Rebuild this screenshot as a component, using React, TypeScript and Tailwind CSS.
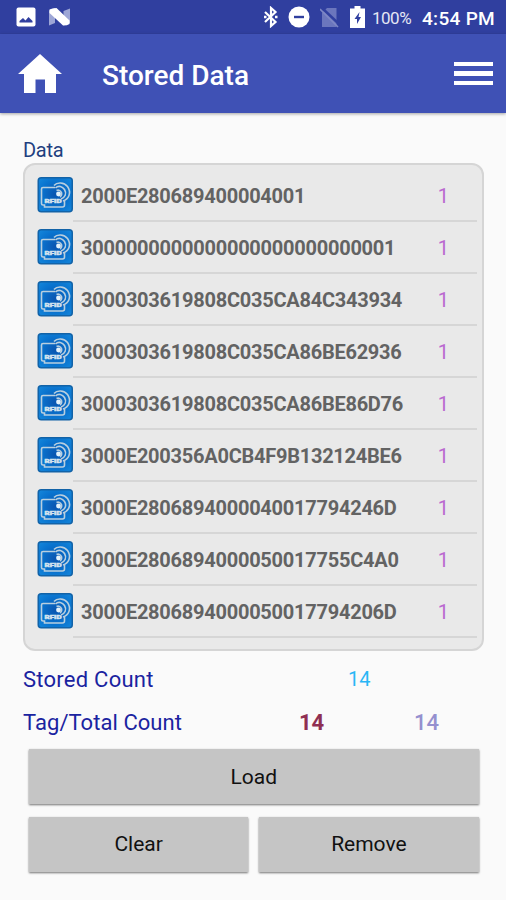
const tags = [
  { id: "2000E280689400004001", count: 1 },
  { id: "3000000000000000000000000001", count: 1 },
  { id: "3000303619808C035CA84C343934", count: 1 },
  { id: "3000303619808C035CA86BE62936", count: 1 },
  { id: "3000303619808C035CA86BE86D76", count: 1 },
  { id: "3000E200356A0CB4F9B132124BE6", count: 1 },
  { id: "3000E2806894000040017794246D", count: 1 },
  { id: "3000E2806894000050017755C4A0", count: 1 },
  { id: "3000E2806894000050017794206D", count: 1 },
];

function StatusBar() {
  return (
    <div className="flex h-[34px] items-center bg-[#303f9f] text-white">
      <svg className="ml-4 h-5 w-5" viewBox="0 0 20 20">
        <rect x="0.5" y="0.5" width="19" height="19" rx="2" fill="#fff" />
        <path d="M3.500 15.500V14L7 11l2.500 2.500 3-3.500 4 4v1.500z" fill="#303f9f" />
      </svg>
      <svg className="ml-[13px] h-[18px] w-[21px]" viewBox="0 0 21 18">
        <path d="M0 2.500 6 0v15l-6 2.500zM14.500 3l6.500-2.500V15l-6.500 2.500z" fill="#9da6d6" />
        <path d="M0.500 1.500Q3 0 7.500 0L20.500 12.500v3.500q-2 1.500-6.500 1.500L0.500 5z" fill="#fff" />
      </svg>
      <div className="flex-1" />
      <svg className="h-[22px] w-[14px]" viewBox="0 0 14 22" fill="none" stroke="#fff" strokeWidth="2.200">
        <path d="m1 6 10.500 10L7 20V2l4.500 4L1 16" />
        <path d="M0 11h2.500M11 11h2.500" strokeWidth="2.400" />
      </svg>
      <svg className="ml-[10px] h-[22px] w-[22px]" viewBox="0 0 22 22">
        <circle cx="11" cy="11" r="10.500" fill="#fff" />
        <path d="M6 11h10" stroke="#303f9f" strokeWidth="2.400" />
      </svg>
      <svg className="ml-[10px] h-[21px] w-[19px]" viewBox="0 0 19 21">
        <path d="M7 1h9.500v19H2V6z" fill="#6b76bd" />
        <path d="m1 0 19 18" stroke="#303f9f" strokeWidth="2.500" />
        <path d="m0 2 18 18" stroke="#7d87c5" strokeWidth="1.600" />
      </svg>
      <svg className="ml-[11px] mr-px h-[22px] w-[15px]" viewBox="0 0 15 22">
        <path d="M4.500 0h6v2.500H15V22H0V2.500h4.500z" fill="#fff" />
        <path d="M9.500 6 4.500 13H7v5l4-7H8.500z" fill="#303f9f" />
      </svg>
      <span className="ml-[6px] w-[50px] whitespace-nowrap pt-0.5 text-[17px] leading-none tracking-[-0.5px] text-[#e4e6f4]">100%</span>
      <span className="mr-[11px] w-[73px] whitespace-nowrap pt-0.5 text-[19px] font-medium leading-none tracking-[0.3px]">4:54 PM</span>
    </div>
  );
}

function AppBar() {
  return (
    <header className="flex h-[79px] items-center bg-[#3f51b5] shadow-[0_1px_3px_rgba(0,0,0,0.35)]">
      <svg className="ml-[18px] h-[40px] w-11" viewBox="0 0 44 40">
        <path d="M22 0 44 20h-6v19H27V25.500h-9.500V39H6V20H0z" fill="#fff" />
      </svg>
      <h1 className="ml-10 flex-1 whitespace-nowrap pt-1 text-[28px] font-medium leading-none text-white">Stored Data</h1>
      <div className="mr-[13px] flex w-[39px] flex-col gap-[5px]">
        <span className="h-[4.500px] bg-white" />
        <span className="h-[4.500px] bg-white" />
        <span className="h-[4.500px] bg-white" />
      </div>
    </header>
  );
}

function TagIcon() {
  return (
    <svg className="h-9 w-9 shrink-0" viewBox="0 0 36 36">
      <defs>
        <radialGradient id="tagFill" cx="0.5" cy="0.5" r="0.7">
          <stop offset="0" stopColor="#0a55b0" />
          <stop offset="0.6" stopColor="#0a74cf" />
          <stop offset="1" stopColor="#1588dc" />
        </radialGradient>
      </defs>
      <rect x="1.250" y="0.75" width="34" height="34" rx="3" fill="url(#tagFill)" stroke="#1263a8" strokeWidth="1.500" />
      <g fill="none" stroke="#b9cfdf" strokeWidth="1.600">
        <path d="M18 10.500H6q-1.500 0-1.500 1.500v14.500q0 1.500 1.500 1.500h1.500v2h18q2 0 2-2v-4" />
        <path d="M17 8.500C20 5 27 5 30.500 9.500 35 16 31.500 22 26 24" />
        <path d="M18.500 11c3-3 7-1.500 9 1.500 2.500 4 0.500 8-3.500 9.500" />
        <path d="M19.500 13.500c2-1 4 0 5 2 0.500 2 0 3.500-1.500 4.500" />
      </g>
      <circle cx="21.500" cy="17" r="2.400" fill="#e4f2fb" />
      <text x="7.500" y="25.500" fontSize="6.200" fontWeight="900" fill="#d3e2ee" stroke="#d3e2ee" strokeWidth="0.5" textLength="17" lengthAdjust="spacingAndGlyphs">RFID</text>
    </svg>
  );
}

function TagRow({ id, count }: { id: string; count: number }) {
  return (
    <li className="flex h-[52px] pl-3">
      <div className="pt-[7px]">
        <TagIcon />
      </div>
      <div className="mr-[5px] flex flex-1 items-center border-b-2 border-[#d6d6d6] pl-[8px] pt-0.5 text-[20px] leading-none">
        <span className="flex-1 whitespace-nowrap font-bold tracking-[-0.25px] text-[#636363]">{id}</span>
        <span className="mr-[28px] text-[#ba68d0]">{count}</span>
      </div>
    </li>
  );
}

function Button({ children }: { children: string }) {
  return (
    <button className="h-[55px] flex-1 bg-[#c5c5c5] pt-[2px] text-[21px] text-[#111] shadow-[0_1px_2px_rgba(0,0,0,0.55)]">
      {children}
    </button>
  );
}

export default function App() {
  return (
    <div className="h-[900px] w-[506px] overflow-hidden bg-[#fafafa] font-['Roboto',sans-serif]">
      <StatusBar />
      <AppBar />
      <main className="pl-[23px] pr-[22px] pt-[25px]">
        <h2 className="h-[25px] text-[20px] leading-[24px] tracking-[-0.3px] text-[#1f3f80]">Data</h2>
        <ul className="h-[488px] rounded-xl border-2 border-[#d5d5d5] bg-[#e9e9e9] pt-[5px]">
          {tags.map((tag) => (
            <TagRow key={tag.id} {...tag} />
          ))}
        </ul>
        <div className="flex h-[56px] items-center text-[22px] text-[#1a23a0]">
          <span className="w-[325px] tracking-[0.25px]">Stored Count</span>
          <span className="text-[20px] text-[#29b6f6]">14</span>
        </div>
        <div className="flex h-[30px] items-center text-[22px] text-[#1a23a0]">
          <span className="w-[276px] tracking-[0.05px]">Tag/Total Count</span>
          <span className="w-[115px] font-bold text-[#8f2f52]">14</span>
          <span className="font-medium text-[#9590cf]">14</span>
        </div>
        <div className="flex flex-col gap-[12.500px] pl-[6px] pr-[5.500px] pt-3">
          <div className="flex">
            <Button>Load</Button>
          </div>
          <div className="flex gap-[11px]">
            <Button>Clear</Button>
            <Button>Remove</Button>
          </div>
        </div>
      </main>
    </div>
  );
}
